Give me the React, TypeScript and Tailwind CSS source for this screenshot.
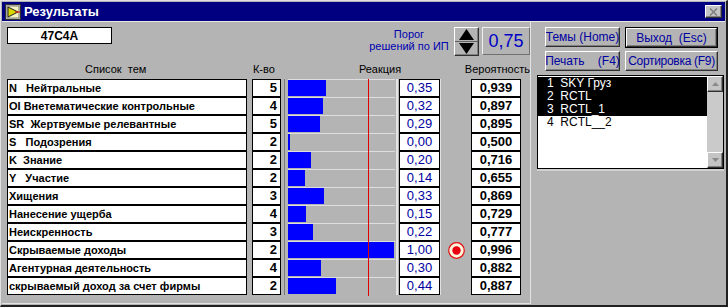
import React from "react";

type Row = {
  name: string;
  count: number;
  reaction: number;
  prob: string;
  hit?: boolean;
};

const rows: Row[] = [
  { name: "N   Нейтральные", count: 5, reaction: 0.35, prob: "0,939" },
  { name: "OI Внетематические контрольные", count: 4, reaction: 0.32, prob: "0,897" },
  { name: "SR  Жертвуемые релевантные", count: 5, reaction: 0.29, prob: "0,895" },
  { name: "S   Подозрения", count: 2, reaction: 0, prob: "0,500" },
  { name: "K  Знание", count: 2, reaction: 0.2, prob: "0,716" },
  { name: "Y   Участие", count: 2, reaction: 0.14, prob: "0,655" },
  { name: "Хищения", count: 3, reaction: 0.33, prob: "0,869" },
  { name: "Нанесение ущерба", count: 4, reaction: 0.15, prob: "0,729" },
  { name: "Неискренность", count: 3, reaction: 0.22, prob: "0,777" },
  { name: "Скрываемые доходы", count: 2, reaction: 1, prob: "0,996", hit: true },
  { name: "Агентурная деятельность", count: 4, reaction: 0.3, prob: "0,882" },
  { name: "скрываемый доход за счет фирмы", count: 2, reaction: 0.44, prob: "0,887" },
];

const themes = [
  { label: "1  SKY Груз", selected: true },
  { label: "2  RCTL", selected: true },
  { label: "3  RCTL_1", selected: true },
  { label: "4  RCTL__2", selected: false },
];

const raised =
  "border border-t-white border-l-white border-r-[#303030] border-b-[#303030] shadow-[inset_-1px_-1px_0_#808080]";

function fmt(v: number) {
  return v.toFixed(2).replace(".", ",");
}

function AppIcon() {
  return (
    <svg width="16" height="16" viewBox="0 0 16 16">
      <rect x="0.5" y="0.5" width="15" height="15" fill="#c8c8c8" stroke="#303030" />
      <rect x="2" y="2" width="12" height="12" fill="#f4f4c0" stroke="#808080" />
      <path d="M3 3 L13 8 L3 13 Z" fill="#d8d800" stroke="#202020" strokeWidth="1" />
      <path d="M10 8 H15" stroke="#e02000" strokeWidth="1.2" />
    </svg>
  );
}

function Indicator() {
  return (
    <svg width="17" height="17" viewBox="0 0 17 17">
      <circle cx="8.5" cy="8.5" r="7.8" fill="#fff4dc" stroke="#e01010" strokeWidth="1.2" />
      <circle cx="8.5" cy="8.5" r="4.2" fill="#e80010" />
    </svg>
  );
}

function TableRow({ row }: { row: Row }) {
  const barWidth = Math.round(2 + row.reaction * 104);

  return (
    <div className="flex h-[18px]">
      <div className="flex h-[18px] w-[240px] items-center whitespace-pre border border-black bg-white pl-[1px] text-[11px] font-bold text-black">
        {row.name}
      </div>

      <div className="ml-[5px] flex h-[18px] w-[29px] items-center justify-end border border-black bg-white pr-[3px] text-[13px] font-bold text-black">
        {row.count}
      </div>

      <div className="ml-[3px] h-[18px] w-[114px] border-l border-r-2 border-l-[#7c7c7c] border-r-[#e4e4e4] pl-[3px] pr-[2px]">
        <div className="relative h-[18px] w-[107px] border-t border-t-[#dedede] pb-[1px]">
          <div className="h-[16px] bg-[#0000ff]" style={{ width: barWidth }} />
          <div className="absolute left-[80px] top-[-1px] h-[19px] w-px bg-[#e00000]" />
        </div>
      </div>

      <div className="ml-[1px] flex h-[18px] w-[41px] items-center justify-center border border-black bg-white text-[13px] text-[#0000a0]">
        {fmt(row.reaction)}
      </div>

      <div className="flex h-[18px] w-[31px] items-center justify-center border-l border-l-[#e0e0e0]">
        {row.hit && <Indicator />}
      </div>

      <div className="flex h-[18px] w-[50px] items-center justify-center border border-black bg-white text-[13px] font-bold text-black">
        {row.prob}
      </div>
    </div>
  );
}

export default function App() {
  return (
    <div className="h-[307px] w-[728px] overflow-hidden border-l border-t border-r-2 border-b-2 border-l-[#e0e0e0] border-t-[#e0e0e0] border-r-[#202020] border-b-[#202020] bg-[#b4b4b4] p-[1px] font-['Liberation_Sans',Arial,sans-serif]">
      <div className="flex h-[19px] items-center bg-[#000080] pl-[3px] pr-[3px]">
        <AppIcon />
        <span className="ml-[3px] text-[13px] font-bold text-white">Результаты</span>
        <div className="flex-1" />
        <div className={`flex h-[13px] w-[17px] items-center justify-center bg-[#c4c4c4] ${raised}`}>
          <svg width="9" height="8" viewBox="0 0 9 8">
            <path d="M1 0.5 L8 7.5 M8 0.5 L1 7.5" stroke="#808080" strokeWidth="1.6" />
          </svg>
        </div>
      </div>

      <div className="flex h-[283px] border-t border-t-[#e8e8e8]">
        <div className="w-[528px] border-b border-b-[#e4e4e4]">
          <div className="flex h-[36px] items-start pt-[5px]">
            <div className="ml-[5px] flex h-[17px] w-[105px] items-center justify-center border border-black bg-white text-[12px] font-bold text-black">
              47C4A
            </div>
            <div className="flex-1" />
            <div className="mt-[1px] w-[84px] text-center text-[11px] leading-[12px] text-[#0000b0]">
              <div>Порог</div>
              <div>решений по ИП</div>
            </div>
            <div className={`ml-[3px] flex h-[29px] w-[25px] flex-col items-center bg-[#b4b4b4] ${raised}`}>
              <div className="flex h-[13px] items-end">
                <svg width="15" height="11" viewBox="0 0 15 11">
                  <path d="M7.5 0 L15 11 H0 Z" fill="#000" />
                </svg>
              </div>
              <div className="my-[1px] h-px w-full bg-[#606060]" />
              <div className="flex h-[13px] items-start">
                <svg width="15" height="11" viewBox="0 0 15 11">
                  <path d="M0 0 H15 L7.5 11 Z" fill="#000" />
                </svg>
              </div>
            </div>
            <div className="ml-[3px] flex h-[28px] w-[48px] items-center justify-center border border-t-[#f0f0f0] border-l-[#f0f0f0] border-r-[#707070] border-b-[#707070] text-[18px] text-[#0000c8]">
              0,75
            </div>
          </div>

          <div className="flex h-[21px] pt-[5px] text-[11px] leading-[13px] text-black">
            <div className="w-[250px] whitespace-pre pl-[83px]">Список  тем</div>
            <div className="w-[104px] pl-[1px]">К-во</div>
            <div className="w-[107px] pl-[3px]">Реакция</div>
            <div className="pl-[2px]">Вероятность</div>
          </div>

          <div className="ml-[5px]">
            {rows.map((row) => (
              <TableRow key={row.name} row={row} />
            ))}
          </div>
        </div>

        <div className="w-[196px] border-l border-l-[#e4e4e4] pt-[5px]">
          <div className="ml-[14px] flex gap-[5px] text-[12px] text-[#0000a0]">
            <div className={`flex h-[20px] w-[75px] items-center justify-center whitespace-nowrap ${raised}`}>
              Темы (Home)
            </div>
            <div className="flex h-[21px] w-[93px] border border-black">
              <div className={`flex h-full w-full items-center justify-center whitespace-pre ${raised}`}>
                Выход  (Esc)
              </div>
            </div>
          </div>
          <div className="ml-[14px] mt-[3px] flex gap-[5px] text-[12px] text-[#0000a0]">
            <div className={`flex h-[20px] w-[75px] items-center justify-center whitespace-pre ${raised}`}>
              Печать    (F4)
            </div>
            <div className={`flex h-[20px] w-[93px] items-center justify-center whitespace-nowrap tracking-[-0.3px] ${raised}`}>
              Сортировка (F9)
            </div>
          </div>

          <div className="ml-[6px] mt-[4px] flex h-[94px] w-[187px] border border-black bg-white shadow-[0_2px_0_#d0d0d0]">
            <div className="flex-1 pt-px">
              {themes.map((t) => (
                <div
                  key={t.label}
                  className={`h-[13px] whitespace-pre pl-[9px] text-[12px] leading-[13px] ${
                    t.selected ? "bg-black text-white" : "bg-white text-black"
                  }`}
                >
                  {t.label}
                </div>
              ))}
            </div>
            <div className="flex w-[16px] flex-col justify-between bg-[#cacaca]">
              <div className={`flex h-[16px] items-center justify-center bg-[#c4c4c4] ${raised}`}>
                <svg width="7" height="4" viewBox="0 0 7 4">
                  <path d="M3.5 0 L7 4 H0 Z" fill="#8a8a8a" />
                </svg>
              </div>
              <div className={`flex h-[16px] items-center justify-center bg-[#c4c4c4] ${raised}`}>
                <svg width="7" height="4" viewBox="0 0 7 4">
                  <path d="M0 0 H7 L3.5 4 Z" fill="#8a8a8a" />
                </svg>
              </div>
            </div>
          </div>
        </div>
      </div>
    </div>
  );
}
